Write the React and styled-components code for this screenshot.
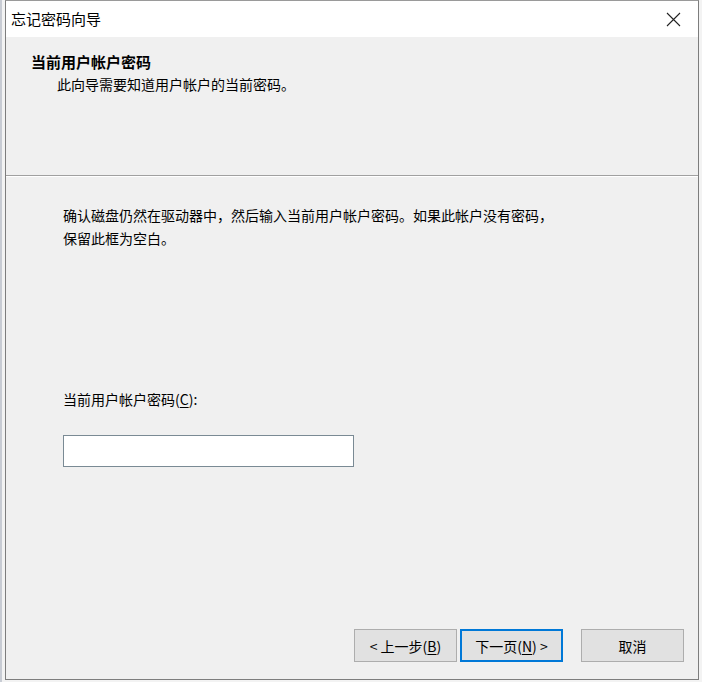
import React from 'react';
import styled, { createGlobalStyle } from 'styled-components';

const GlobalStyle = createGlobalStyle`
  html, body {
    margin: 0;
    padding: 0;
    background: #f3f3f3;
  }
  body {
    font-family: "Noto Sans CJK SC", "Noto Sans", sans-serif;
    color: #000;
  }
`;

const Screen = styled.div`
  width: 702px;
  height: 682px;
  box-sizing: border-box;
  padding: 0 3px 2px 3px;
  background: #f3f3f3;
  border-left: 2px solid #c8ccd4;
`;

const Window = styled.div`
  height: 100%;
  box-sizing: border-box;
  border: 1px solid #7d7d7d;
  border-top: 1px solid #9a9a9a;
  background: #f0f0f0;
  display: flex;
  flex-direction: column;
`;

const TitleBar = styled.div`
  height: 36px;
  flex-shrink: 0;
  background: #ffffff;
  display: flex;
  align-items: center;
  justify-content: space-between;
  padding: 0 0 0 5px;
`;

const TitleText = styled.span`
  font-size: 15px;
  line-height: 1;
  margin-top: -1px;
`;

const CloseButton = styled.button`
  width: 46px;
  height: 36px;
  border: none;
  background: transparent;
  display: flex;
  align-items: center;
  justify-content: center;
  padding: 0;
  margin-right: 2px;
`;

const Header = styled.div`
  height: 139px;
  flex-shrink: 0;
  box-sizing: border-box;
  padding: 14px 0 0 25px;
  border-bottom: 1px solid #a0a0a0;
  box-shadow: 0 1px 0 #ffffff;
`;

const HeaderTitle = styled.div`
  font-size: 15px;
  font-weight: 700;
  line-height: 22px;
`;

const HeaderSub = styled.div`
  font-size: 14px;
  line-height: 22px;
  padding-left: 26px;
`;

const Body = styled.div`
  flex: 1;
  padding: 28px 0 0 57px;
  display: flex;
  flex-direction: column;
`;

const Paragraph = styled.p`
  margin: 0;
  font-size: 14px;
  line-height: 23px;
`;

const Label = styled.label`
  margin-top: 138px;
  font-size: 14px;
  line-height: 22px;
  u {
    text-decoration: underline;
    text-underline-offset: 2px;
  }
`;

const PasswordInput = styled.input`
  margin-top: 25px;
  width: 291px;
  height: 32px;
  box-sizing: border-box;
  border: 1px solid #7a8a94;
  background: #ffffff;
  outline: none;
`;

const Footer = styled.div`
  display: flex;
  align-items: center;
  padding: 0 14px 17px 0;
  justify-content: flex-end;
`;

const Button = styled.button`
  width: 103px;
  height: 33px;
  box-sizing: border-box;
  margin-left: ${p => p.$gap || 0}px;
  background: #e1e1e1;
  border: ${p => (p.$primary ? '2px solid #0078d7' : '1px solid #adadad')};
  font-family: "Noto Sans CJK SC", "Noto Sans", sans-serif;
  font-size: 14px;
  color: #000;
  padding: 0;
  display: flex;
  align-items: center;
  justify-content: center;
  u {
    text-decoration: underline;
    text-underline-offset: 2px;
  }
`;

const App = () => {
  return (
    <>
      <GlobalStyle />
      <Screen>
        <Window>
          <TitleBar>
            <TitleText>忘记密码向导</TitleText>
            <CloseButton aria-label="关闭">
              <svg width="15" height="15" viewBox="0 0 15 15">
                <path d="M1 1 L14 14 M14 1 L1 14" stroke="#222" strokeWidth="1.1" fill="none" />
              </svg>
            </CloseButton>
          </TitleBar>
          <Header>
            <HeaderTitle>当前用户帐户密码</HeaderTitle>
            <HeaderSub>此向导需要知道用户帐户的当前密码。</HeaderSub>
          </Header>
          <Body>
            <Paragraph>
              确认磁盘仍然在驱动器中，然后输入当前用户帐户密码。如果此帐户没有密码，
              <br />
              保留此框为空白。
            </Paragraph>
            <Label htmlFor="pwd">
              当前用户帐户密码(<u>C</u>):
            </Label>
            <PasswordInput id="pwd" type="password" />
          </Body>
          <Footer>
            <Button>&lt; 上一步(<u>B</u>)</Button>
            <Button $primary $gap={3}>下一页(<u>N</u>) &gt;</Button>
            <Button $gap={18}>取消</Button>
          </Footer>
        </Window>
      </Screen>
    </>
  );
};

export default App;
